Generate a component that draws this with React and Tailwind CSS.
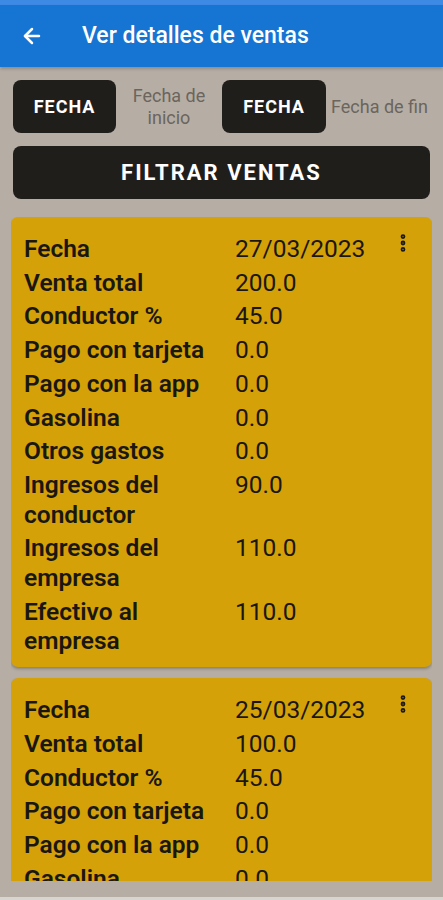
import { ArrowLeft, EllipsisVertical } from 'lucide-react';

const sales = [
    {
        id: 1,
        rows: [
            ['Fecha', '27/03/2023'],
            ['Venta total', '200.0'],
            ['Conductor %', '45.0'],
            ['Pago con tarjeta', '0.0'],
            ['Pago con la app', '0.0'],
            ['Gasolina', '0.0'],
            ['Otros gastos', '0.0'],
            ['Ingresos del conductor', '90.0'],
            ['Ingresos del empresa', '110.0'],
            ['Efectivo al empresa', '110.0'],
        ],
    },
    {
        id: 2,
        rows: [
            ['Fecha', '25/03/2023'],
            ['Venta total', '100.0'],
            ['Conductor %', '45.0'],
            ['Pago con tarjeta', '0.0'],
            ['Pago con la app', '0.0'],
            ['Gasolina', '0.0'],
            ['Otros gastos', '0.0'],
            ['Ingresos del conductor', '45.0'],
            ['Ingresos del empresa', '55.0'],
            ['Efectivo al empresa', '55.0'],
        ],
    },
];

const SaleCard = ({ sale }) => (
    <div className="relative rounded-[7px] bg-[#d4a108] pl-[13px] pr-3 pt-[17px] pb-[11px] shadow-[0_2px_3px_rgba(0,0,0,0.25)]">
        <button type="button" className="absolute right-[18px] top-[15px] text-[#1c1a14]">
            <EllipsisVertical size={22} strokeWidth={3.2} />
        </button>
        <div className="flex flex-col gap-[4px]">
            {sale.rows.map(([label, value]) => (
                <div key={label} className="flex text-[24.5px] leading-[29.7px] text-[#1a1712]">
                    <span className="w-[211px] shrink-0 pr-2 font-semibold">{label}</span>
                    <span>{value}</span>
                </div>
            ))}
        </div>
    </div>
);

export default function App() {
    return (
        <div className="flex h-[900px] flex-col bg-[#b6aea4]" style={{ fontFamily: 'Roboto, "Liberation Sans", sans-serif' }}>
            <div className="h-[5px] bg-[#3d8ae4]" />
            <header className="flex h-[62px] items-center bg-[#1674d3] shadow-[0_2px_3px_rgba(0,0,0,0.2)]">
                <ArrowLeft className="ml-[20px] text-white" size={24} strokeWidth={2.5} />
                <h1 className="ml-[38px] text-[23px] font-medium text-white">Ver detalles de ventas</h1>
            </header>
            <div className="flex flex-1 flex-col overflow-hidden px-[11px] pt-[13px]">
                <div className="flex items-center px-[2px]">
                    <button type="button" className="h-[53px] w-[103px] rounded-[8px] bg-[#201e1b] text-[18px] font-bold tracking-[1px] text-white">
                        FECHA
                    </button>
                    <span className="w-[106px] text-center text-[18px] leading-[22px] text-[#6b655d]">
                        Fecha de<br />inicio
                    </span>
                    <button type="button" className="h-[53px] w-[104px] rounded-[8px] bg-[#201e1b] text-[18px] font-bold tracking-[1px] text-white">
                        FECHA
                    </button>
                    <span className="ml-[5px] whitespace-nowrap text-[18px] text-[#6b655d]">Fecha de fin</span>
                </div>
                <button type="button" className="mx-[2px] mt-[13px] h-[53px] rounded-[8px] bg-[#201e1b] text-[22px] font-bold tracking-[2px] text-white">
                    FILTRAR VENTAS
                </button>
                <div className="mt-[18px] mb-[16px] flex flex-1 flex-col gap-[11px] overflow-hidden">
                    {sales.map((sale) => (
                        <SaleCard key={sale.id} sale={sale} />
                    ))}
                </div>
            </div>
            <div className="h-[3px] bg-[#d8d4cf]" />
        </div>
    );
}
